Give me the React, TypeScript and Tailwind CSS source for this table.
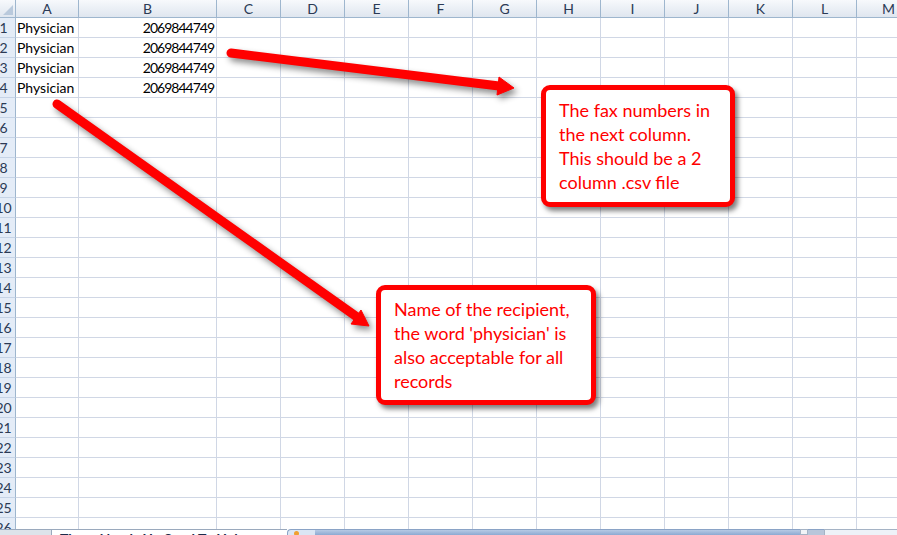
import React from "react";

const cols = [
  { l: "A", w: 63 },
  { l: "B", w: 138 },
  { l: "C", w: 64 },
  { l: "D", w: 64 },
  { l: "E", w: 64 },
  { l: "F", w: 64 },
  { l: "G", w: 64 },
  { l: "H", w: 64 },
  { l: "I", w: 64 },
  { l: "J", w: 64 },
  { l: "K", w: 64 },
  { l: "L", w: 64 },
  { l: "M", w: 64 },
];

const rows = Array.from({ length: 26 }, (_, i) => i + 1);

export default function App() {
  return (
    <div
      className="relative w-[897px] h-[535px] overflow-hidden bg-white"
      style={{ fontFamily: "Lato, 'Noto Sans', sans-serif" }}
    >
      <div className="flex flex-col">
        <div className="h-[529px] overflow-hidden">
          {/* header row */}
          <div className="flex h-[18px]">
            <div className="w-[16px] shrink-0 h-[18px] border-r border-b border-[#9eb6ce] bg-gradient-to-b from-[#f7f9fc] to-[#dfe6ef] relative overflow-hidden">
              <div className="absolute right-[2px] bottom-[2px] w-0 h-0 border-l-[10px] border-l-transparent border-b-[10px] border-b-[#b9c9dc]" />
            </div>
            {cols.map((c) => (
              <div
                key={c.l}
                style={{ width: c.w }}
                className="shrink-0 h-[18px] border-r border-b border-[#9eb6ce] bg-gradient-to-b from-[#f7f9fc] to-[#dfe6ef] flex items-center justify-center text-[14px] leading-none text-[#2b3a55]"
              >
                {c.l}
              </div>
            ))}
          </div>
          {rows.map((r) => (
            <div key={r} className="flex h-[20px]">
              <div className="w-[16px] shrink-0 h-[20px] border-r border-b border-r-[#9eb6ce] border-b-[#c5d3e6] bg-[#e4ecf7] overflow-hidden relative">
                <div className="absolute left-[-8px] top-0 w-[23px] h-[19px] flex items-center justify-center text-[14px] leading-none text-[#2b3a55]">
                  {r}
                </div>
              </div>
              {cols.map((c, ci) => (
                <div
                  key={c.l}
                  style={{ width: c.w }}
                  className={
                    "shrink-0 h-[20px] border-r border-b border-[#d0d7e5] flex items-center text-[14px] leading-none text-black overflow-hidden whitespace-nowrap " +
                    (ci === 1 ? "justify-end pr-[2px] tracking-[-1px]" : "pl-[1px]")
                  }
                >
                  {r <= 4 && ci === 0 ? "Physician" : ""}
                  {r <= 4 && ci === 1 ? "2069844749" : ""}
                </div>
              ))}
            </div>
          ))}
        </div>
        {/* bottom sheet tab bar */}
        <div className="h-[6px] flex overflow-hidden">
          <div className="w-[52px] shrink-0 bg-[#dde3ea] border-r border-t border-[#9aa9bd]" />
          <div className="w-[235px] shrink-0 bg-white border-t border-[#9aa9bd] overflow-hidden relative">
            <div className="absolute left-[8px] top-[2px] text-[14px] font-bold leading-none text-[#1c2b4a] whitespace-nowrap">
              Three Needs Up Send To Help
            </div>
          </div>
          <div className="w-[28px] shrink-0 bg-[#dbe6f4] border-t border-l border-[#8aa3c6] rounded-tl-[4px] relative">
            <div className="absolute left-[6px] top-[1px] w-[5px] h-[5px] bg-[#f0a030] rounded-full" />
          </div>
          <div className="w-[485px] shrink-0 bg-gradient-to-b from-[#b7cae4] to-[#8ca9d2] border-t border-[#8aa3c6]" />
          <div className="w-[8px] shrink-0 bg-[#f2f4f7] border border-[#a5b3c5]" />
          <div className="w-[16px] shrink-0 bg-[#b8c6da] border-t border-[#8aa3c6]" />
          <div className="flex-1 bg-[#eef2f8] border-t border-l border-[#a5b3c5]" />
        </div>
      </div>

      {/* arrows */}
      <svg
        className="absolute left-0 top-0 pointer-events-none"
        width="897"
        height="535"
        style={{ filter: "drop-shadow(3px 4px 3px rgba(0,0,0,0.45))" }}
      >
        <line x1="231" y1="53" x2="499" y2="86" stroke="#ff0000" strokeWidth="9" strokeLinecap="round" />
        <polygon points="514,88 497,95 499,77" fill="#ff0000" stroke="#ff0000" strokeWidth="1" strokeLinejoin="round" />
        <line x1="57" y1="104" x2="357" y2="317" stroke="#ff0000" strokeWidth="9" strokeLinecap="round" />
        <polygon points="369,326 351,324 361,310" fill="#ff0000" stroke="#ff0000" strokeWidth="1" strokeLinejoin="round" />
      </svg>

      {/* callouts */}
      <div className="absolute left-[541px] top-[85px] w-[194px] h-[122px] bg-white border-[5px] border-[#ff0000] rounded-[9px] shadow-[3px_4px_5px_rgba(0,0,0,0.5)] pl-[13px] pt-[8px] text-[#ff0000] text-[18px] leading-[24px] whitespace-nowrap">
        <div>The fax numbers in</div>
        <div>the next column.</div>
        <div>This should be a 2</div>
        <div>column .csv file</div>
      </div>
      <div className="absolute left-[376px] top-[285px] w-[220px] h-[120px] bg-white border-[5px] border-[#ff0000] rounded-[9px] shadow-[3px_4px_5px_rgba(0,0,0,0.5)] pl-[13px] pt-[7px] text-[#ff0000] text-[18px] leading-[24px] whitespace-nowrap">
        <div>Name of the recipient,</div>
        <div>the word 'physician' is</div>
        <div>also acceptable for all</div>
        <div>records</div>
      </div>
    </div>
  );
}
